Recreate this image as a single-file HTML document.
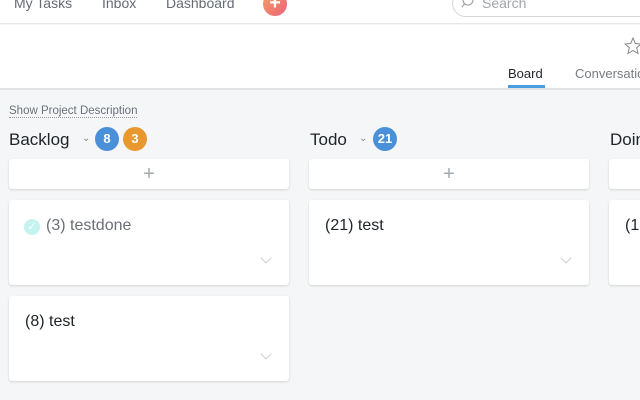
<!DOCTYPE html>
<html><head><style>
*{box-sizing:border-box;margin:0;padding:0}
body{width:640px;height:400px;overflow:hidden;background:#f5f6f8;font-family:"Liberation Sans",sans-serif;position:relative}
.top{position:absolute;left:0;top:0;width:640px;height:24px;background:#fff;border-bottom:1px solid #e6e7e9}
.nav{position:absolute;top:-5px;font-size:14px;color:#666b73}
.hdr{position:absolute;left:0;top:25px;width:640px;height:65px;background:#fff;border-bottom:2px solid #e0e2e5}
.abs{position:absolute}
.card{position:absolute;background:#fff;border-radius:3px;box-shadow:0 1px 2px rgba(0,0,0,.15)}
.badge{position:absolute;width:24px;height:24px;border-radius:12px;color:#fff;font-weight:bold;font-size:13px;text-align:center;line-height:24px}
.col{position:absolute;font-size:17px;color:#1f2328}
.plus{position:absolute;left:0;right:0;top:4px;text-align:center;font-size:20px;color:#a5a9ae;font-weight:300}
.t{position:absolute;left:16px;top:17px;font-size:16px;color:#1f2328}
.chev{position:absolute;right:19px;width:8px;height:8px;border-right:1px solid #ccc;border-bottom:1px solid #ccc;transform:rotate(45deg)}
</style></head><body>
<div class="top">
<div class="nav" style="left:14px">My Tasks</div>
<div class="nav" style="left:102px">Inbox</div>
<div class="nav" style="left:166px">Dashboard</div>
<div class="abs" style="left:263px;top:-8px;width:24px;height:24px;border-radius:12px;background:linear-gradient(135deg,#f5a262,#ec5f7a);color:#fff;text-align:center;font-size:20px;line-height:22px;font-weight:bold">+</div>
<div class="abs" style="left:452px;top:-10px;width:200px;height:27px;border:1px solid #d4d6da;border-radius:14px"></div>
<svg class="abs" style="left:461px;top:-6px" width="14" height="16"><circle cx="7" cy="6" r="5" fill="none" stroke="#a0a4aa" stroke-width="1.2"/><line x1="3.5" y1="10" x2="1" y2="13" stroke="#a0a4aa" stroke-width="1.2"/></svg>
<div class="nav" style="left:482px;color:#a0a4aa">Search</div>
</div>
<div class="hdr">
<svg class="abs" style="left:624px;top:12px" width="18" height="18"><polygon points="9,1 11.3,6.5 17,7 12.7,10.7 14,16.5 9,13.5 4,16.5 5.3,10.7 1,7 6.7,6.5" fill="none" stroke="#888" stroke-width="1"/></svg>
<div class="abs" style="left:508px;top:41px;font-size:13px;color:#1f2328">Board</div>
<div class="abs" style="left:508px;top:60px;width:37px;height:3px;background:#4a9ee0"></div>
<div class="abs" style="left:575px;top:41px;font-size:13px;color:#777b82">Conversations</div>
</div>
<div class="abs" style="left:9px;top:105px;font-size:11.5px;color:#6b7079;border-bottom:1px dotted #999">Show Project Description</div>
<div class="col" style="left:9px;top:130px">Backlog</div>
<div class="abs" style="left:82px;top:133px;font-size:10px;color:#888">⌄</div>
<div class="badge" style="left:95px;top:127px;background:#4a90d9">8</div>
<div class="badge" style="left:123px;top:127px;background:#e8982f">3</div>
<div class="col" style="left:310px;top:130px">Todo</div>
<div class="abs" style="left:359px;top:133px;font-size:10px;color:#888">⌄</div>
<div class="badge" style="left:373px;top:127px;background:#4a90d9">21</div>
<div class="col" style="left:610px;top:130px">Doing</div>
<div class="card" style="left:9px;top:159px;width:280px;height:30px"><div class="plus">+</div></div>
<div class="card" style="left:309px;top:159px;width:280px;height:30px"><div class="plus">+</div></div>
<div class="card" style="left:609px;top:159px;width:280px;height:30px"></div>
<div class="card" style="left:9px;top:200px;width:280px;height:85px">
<div class="abs" style="left:15px;top:19px;width:16px;height:16px;border-radius:8px;background:#c5f3ef;color:#fff;font-size:11px;text-align:center;line-height:16px">✓</div>
<div class="t" style="left:37px;color:#6b6f76">(3) testdone</div><div class="chev" style="top:54px"></div></div>
<div class="card" style="left:309px;top:200px;width:280px;height:85px"><div class="t">(21) test</div><div class="chev" style="top:54px"></div></div>
<div class="card" style="left:609px;top:200px;width:280px;height:85px"><div class="t">(13)</div></div>
<div class="card" style="left:9px;top:296px;width:280px;height:85px"><div class="t">(8) test</div><div class="chev" style="top:54px"></div></div>
</body></html>
